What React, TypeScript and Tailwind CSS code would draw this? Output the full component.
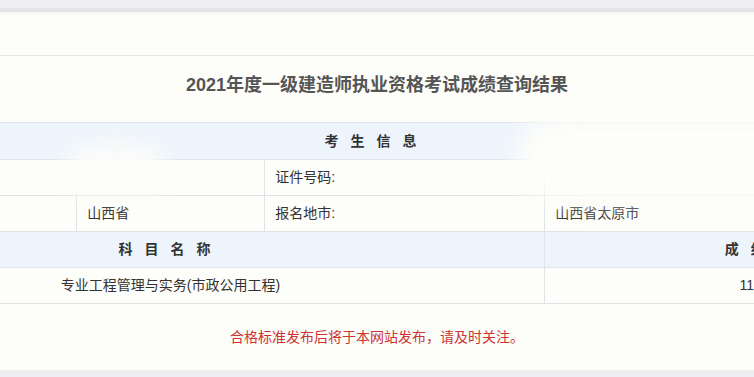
const cell = "border-r border-b border-[#dfe4e8] px-[10px] h-[36px] text-[14px] text-[#333]";
const head = "border-r border-b border-[#dfe4e8] h-[36px] bg-[#edf4fc] text-[14px] font-bold text-[#333] text-center tracking-[12px]";

export default function App() {
  return (
    <div
      className="relative h-[377px] w-[754px] overflow-hidden bg-[#fdfdf9]"
      style={{ fontFamily: '"Liberation Sans", "Noto Sans CJK SC", sans-serif' }}
    >
      {/* browser-ish top strip */}
      <div className="h-[8px] bg-[#efeff3]" />
      <div className="h-[4px] bg-[#e3e3e8]" />
      <div className="h-[2px] bg-[#f6f6f8]" />

      <div className="h-[42px] border-b border-[#e6e6e2]" />

      <div className="flex h-[67px] items-center justify-center border-b border-[#dfe4e8] pb-[8px]">
        <h1 className="text-[18px] font-bold leading-none text-[#555]">
          2021年度一级建造师执业资格考试成绩查询结果
        </h1>
      </div>

      <div className="flex justify-center">
        <table className="w-[1160px] shrink-0 table-fixed border-collapse leading-none">
          <colgroup>
            <col className="w-[280px]" />
            <col className="w-[188px]" />
            <col className="w-[280px]" />
            <col className="w-[412px]" />
          </colgroup>
          <tbody>
            <tr>
              <td colSpan={4} className={head}>考生信息</td>
            </tr>
            <tr>
              <td colSpan={2} className={cell}></td>
              <td className={cell}>证件号码:</td>
              <td className={cell}></td>
            </tr>
            <tr>
              <td className={cell}></td>
              <td className={cell}>山西省</td>
              <td className={cell}>报名地市:</td>
              <td className={cell}>山西省太原市</td>
            </tr>
            <tr>
              <td colSpan={3} className={head}>科目名称</td>
              <td className={head}>成绩</td>
            </tr>
            <tr>
              <td colSpan={3} className={cell + " text-center"}>专业工程管理与实务(市政公用工程)</td>
              <td className={cell + " text-center"}>115</td>
            </tr>
          </tbody>
        </table>
      </div>

      <div className="flex h-[66px] items-center justify-center">
        <p className="text-[14px] leading-none text-[#cc3333]">
          合格标准发布后将于本网站发布，请及时关注。
        </p>
      </div>

      <div className="h-[7px] bg-[#eeeef1]" />

      {/* blurred masks over personal data */}
      <div className="absolute left-[66px] top-[144px] h-[48px] w-[100px] rounded-full bg-[#fdfdf9] blur-md" />
      <div className="absolute left-[515px] top-[114px] h-[86px] w-[270px] rounded-l-full bg-[#fdfdf9] blur-md" />
    </div>
  );
}
